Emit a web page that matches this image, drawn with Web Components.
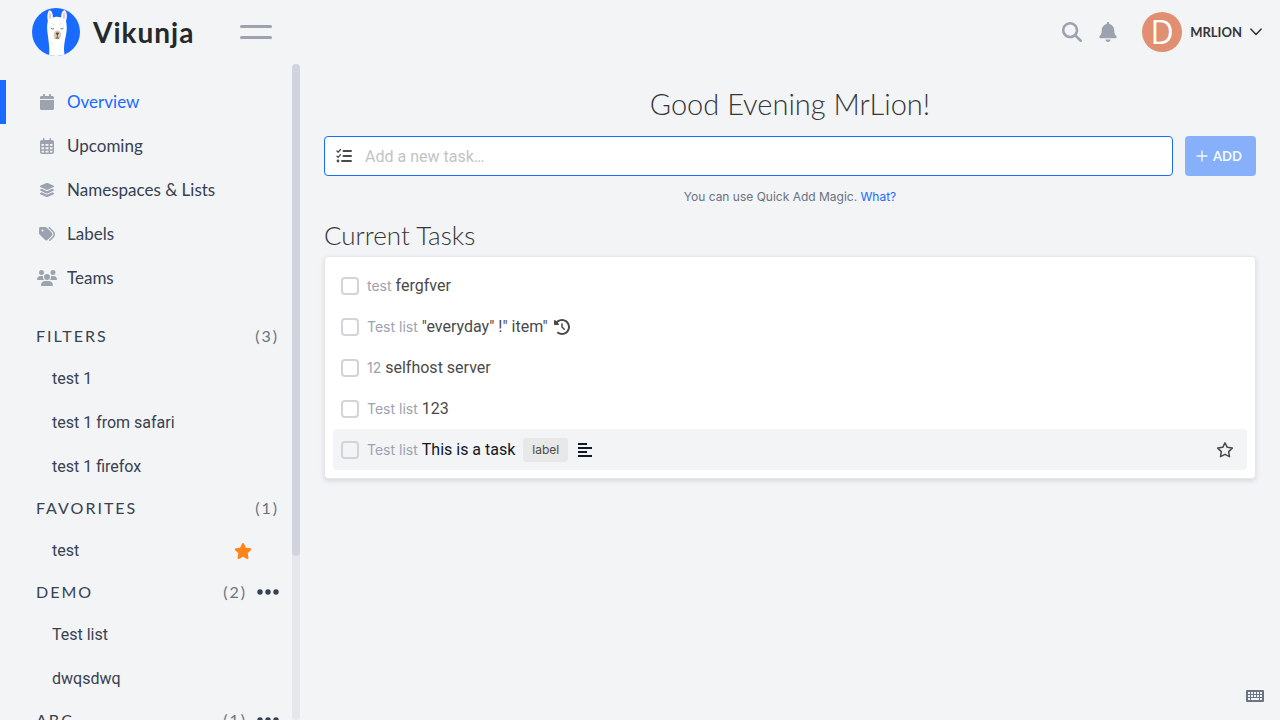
<!DOCTYPE html>
<html lang="en">
<head>
<meta charset="utf-8">
<meta name="viewport" content="width=device-width, initial-scale=1">
<title>Vikunja</title>
<style>
  html, body { margin: 0; }
  body {
    --display: Lato, "Open Sans", sans-serif;
    --body: Roboto, "Open Sans", sans-serif;
    --small: Inter, Roboto, sans-serif;
    --primary: #196aff;
    --grey-300: #d1d5db;
    --grey-400: #9ca3af;
    --grey-500: #6b7280;
    --grey-700: #374151;
    --text: #4a4a4a;
    background: #f3f4f6;
    color: var(--text);
    font: 16px/24px var(--body);
  }
</style>
</head>
<body>
<vk-app></vk-app>

<script>
const define = (name, html, setup) => {
  const template = document.createElement('template');
  template.innerHTML = '<style>*{box-sizing:border-box}a{color:inherit;text-decoration:none}button{font:inherit;color:inherit;background:none;border:0;padding:0;cursor:pointer}[hidden]{display:none!important}</style>' + html;
  customElements.define(name, class extends HTMLElement {
    constructor() {
      super();
      this.attachShadow({ mode: 'open' }).append(template.content.cloneNode(true));
    }
    connectedCallback() { if (setup) setup(this, this.shadowRoot); }
  });
};

const ICONS = {
  calendar: ['0 0 448 512', '<path d="M96 32V64H48C21.5 64 0 85.5 0 112v48H448V112c0-26.5-21.5-48-48-48H352V32c0-17.7-14.3-32-32-32s-32 14.3-32 32V64H160V32c0-17.7-14.3-32-32-32S96 14.3 96 32zM448 192H0V464c0 26.5 21.5 48 48 48H400c26.5 0 48-21.5 48-48V192z"/>'],
  days: ['0 0 448 512', '<path fill-rule="evenodd" d="M96 24V64H64C29 64 0 93 0 128V448c0 35 29 64 64 64H384c35 0 64-29 64-64V128c0-35-29-64-64-64H352V24c0-32-48-32-48 0V64H144V24c0-32-48-32-48 0zM48 192h80v56H48zm128 0h96v56H176zm144 0h80v56H320zM48 296h80v64H48zm128 0h96v64H176zm144 0h80v64H320zM48 408h80v56H64c-9 0-16-7-16-16zm128 0h96v56H176zm144 0h80v40c0 9-7 16-16 16H320z"/>'],
  layers: ['0 0 576 512', '<path d="M264.5 5.2c14.9-6.9 32.1-6.9 47 0l218.6 101c8.5 3.9 13.9 12.4 13.9 21.8s-5.4 17.9-13.9 21.8l-218.6 101c-14.9 6.9-32.1 6.9-47 0L45.9 149.8C37.4 145.8 32 137.3 32 128s5.4-17.9 13.9-21.8L264.5 5.2zM476.9 209.6l53.2 24.6c8.5 3.9 13.9 12.4 13.9 21.8s-5.4 17.9-13.9 21.8l-218.6 101c-14.9 6.9-32.1 6.9-47 0L45.9 277.8C37.4 273.8 32 265.3 32 256s5.4-17.9 13.9-21.8l53.2-24.6 152 70.2c23.4 10.8 50.4 10.8 73.8 0l152-70.2zm-152 198.2l152-70.2 53.2 24.6c8.5 3.9 13.9 12.4 13.9 21.8s-5.4 17.9-13.9 21.8l-218.6 101c-14.9 6.9-32.1 6.9-47 0L45.9 405.8C37.4 401.8 32 393.3 32 384s5.4-17.9 13.9-21.8l53.2-24.6 152 70.2c23.4 10.8 50.4 10.8 73.8 0z"/>'],
  tags: ['0 0 512 512', '<path d="M345 39.1L472.8 168.4c52.4 53 52.4 138.2 0 191.2L360.8 472.9c-9.3 9.4-24.5 9.5-33.9 .2s-9.5-24.5-.2-33.9L438.6 325.9c33.9-34.3 33.9-89.4 0-123.7L310.9 72.9c-9.3-9.4-9.2-24.6 .2-33.9s24.6-9.2 33.9 .2zM0 229.5V80C0 53.5 21.5 32 48 32H197.5c17 0 33.3 6.7 45.3 18.7l168 168c25 25 25 65.5 0 90.5L277.3 442.7c-25 25-65.5 25-90.5 0l-168-168C6.7 262.7 0 246.5 0 229.5zM144 144a32 32 0 1 0 -64 0 32 32 0 1 0 64 0z"/>'],
  users: ['0 0 640 512', '<path d="M144 0a80 80 0 1 1 0 160A80 80 0 1 1 144 0zM512 0a80 80 0 1 1 0 160A80 80 0 1 1 512 0zM0 298.7C0 239.8 47.8 192 106.7 192h42.7c15.9 0 31 3.5 44.6 9.7c-1.3 7.2-1.9 14.7-1.9 22.3c0 38.2 16.8 72.5 43.3 96c-.2 0-.4 0-.7 0H21.3C9.6 320 0 310.4 0 298.7zM405.3 320c-.2 0-.4 0-.7 0c26.6-23.5 43.3-57.8 43.3-96c0-7.6-.7-15-1.9-22.3c13.6-6.3 28.7-9.7 44.6-9.7h42.7C592.2 192 640 239.8 640 298.7c0 11.8-9.6 21.3-21.3 21.3H405.3zM224 224a96 96 0 1 1 192 0 96 96 0 1 1 -192 0zM128 485.3C128 411.7 187.7 352 261.3 352H378.7C452.3 352 512 411.7 512 485.3c0 14.7-11.9 26.7-26.7 26.7H154.7c-14.7 0-26.7-11.9-26.7-26.7z"/>'],
  search: ['0 0 512 512', '<path d="M416 208c0 45.9-14.9 88.3-40 122.7L502.6 457.4c12.5 12.5 12.5 32.8 0 45.3s-32.8 12.5-45.3 0L330.7 376c-34.4 25.2-76.8 40-122.7 40C93.1 416 0 322.9 0 208S93.1 0 208 0S416 93.1 416 208zM208 352a144 144 0 1 0 0-288 144 144 0 1 0 0 288z"/>'],
  bell: ['0 0 448 512', '<path d="M224 0c-17.7 0-32 14.3-32 32V51.2C119 66 64 130.6 64 208v18.8c0 47-17.3 92.4-48.5 127.6l-7.4 8.3c-8.4 9.4-10.4 22.9-5.3 34.4S19.4 416 32 416H416c12.6 0 24-7.4 29.2-18.9s3.1-25-5.3-34.4l-7.4-8.3C401.3 319.2 384 273.9 384 226.8V208c0-77.4-55-142-128-156.8V32c0-17.7-14.3-32-32-32zm45.3 493.3c12-12 18.7-28.3 18.7-45.3H224 160c0 17 6.7 33.3 18.7 45.3s28.3 18.7 45.3 18.7s33.3-6.7 45.3-18.7z"/>'],
  chevron: ['0 0 12 8', '<path d="M1 1.2L6 6.5L11 1.2" fill="none" stroke="currentColor" stroke-width="1.6" stroke-linecap="round" stroke-linejoin="round"/>'],
  star: ['0 0 576 512', '<path d="M316.9 18C311.6 7 300.4 0 288.1 0s-23.4 7-28.8 18L195 150.3 51.4 171.5c-12 1.8-22 10.2-25.7 21.7s-.7 24.2 7.9 32.7L137.8 329 113.2 474.7c-2 12 3 24.2 12.9 31.3s23 8 33.8 2.3l128.3-68.5 128.3 68.5c10.8 5.7 23.9 4.9 33.8-2.3s14.9-19.3 12.9-31.3L438.5 329 542.7 225.9c8.6-8.5 11.7-21.2 7.9-32.7s-13.7-19.9-25.7-21.7L381.2 150.3 316.9 18z"/>'],
  'star-line': ['0 0 576 512', '<path d="M288 26L361 171L521 195L405 309L432 470L288 394L144 470L171 309L55 195L215 171Z" fill="none" stroke="currentColor" stroke-width="48" stroke-linejoin="round"/>'],
  dots: ['0 0 22 6', '<circle cx="3" cy="3" r="2.7"/><circle cx="11" cy="3" r="2.7"/><circle cx="19" cy="3" r="2.7"/>'],
  history: ['0 0 512 512', '<path d="M75 75L41 41C25.9 25.9 0 36.6 0 57.9V168c0 13.3 10.7 24 24 24H134.1c21.4 0 32.1-25.9 17-41l-30.8-30.8C155 85.5 203 64 256 64c106 0 192 86 192 192s-86 192-192 192c-40.8 0-78.6-12.7-109.7-34.4c-14.5-10.1-34.4-6.6-44.6 7.9s-6.6 34.4 7.9 44.6C151.2 495 201.7 512 256 512c141.4 0 256-114.6 256-256S397.4 0 256 0C185.3 0 121.3 28.7 75 75zm181 53c-13.3 0-24 10.7-24 24V256c0 6.4 2.5 12.5 7 17l72 72c9.4 9.4 24.6 9.4 33.9 0s9.4-24.6 0-33.9l-65-65V152c0-13.3-10.7-24-24-24z"/>'],
  align: ['0 0 16 16', '<path d="M1 1h9v2H1zM1 5h14v2H1zM1 9h9v2H1zM1 13h14v2H1z"/>'],
  checklist: ['0 0 16 16', '<g fill="none" stroke="currentColor" stroke-linecap="round"><path d="M1 3L2.2 4.2L4.5 1.5M1 8.2L2.2 9.4L4.5 6.7" stroke-width="1.3" stroke-linejoin="round"/><path d="M7.5 3H15M7.5 8H15M6 13H15" stroke-width="1.9"/></g><circle cx="2" cy="13" r="1.4"/>'],
  plus: ['0 0 12 12', '<path d="M6 1V11M1 6H11" fill="none" stroke="currentColor" stroke-width="1.4" stroke-linecap="round"/>'],
  keyboard: ['0 0 18 12', '<path fill-rule="evenodd" d="M1 0H17Q18 0 18 1V11Q18 12 17 12H1Q0 12 0 11V1Q0 0 1 0ZM2 2v2h2V2zM5 2v2h2V2zM8 2v2h2V2zM11 2v2h2V2zM14 2v2h2V2zM2 5v2h2V5zM5 5v2h2V5zM8 5v2h2V5zM11 5v2h2V5zM14 5v2h2V5zM2 8v2h2V8zM5 8v2h8V8zM14 8v2h2V8z"/>']
};

define('vk-icon', `
  <style>:host{display:inline-flex;flex:none;width:16px;height:16px} svg{width:100%;height:100%;fill:currentColor}</style>
  <svg aria-hidden="true"></svg>`, (host, root) => {
  const [box, body] = ICONS[host.getAttribute('name')];
  const svg = root.querySelector('svg');
  svg.setAttribute('viewBox', box);
  svg.innerHTML = body;
});

define('vk-logo', `
  <style>
    :host{display:block}
    a{display:flex;align-items:center;gap:13px;color:#24292b;font:700 28px/40px var(--display);letter-spacing:1px}
    svg{width:48px;height:48px}
  </style>
  <a href="#">
    <svg viewBox="0 0 48 48" aria-hidden="true">
      <defs><clipPath id="disc"><circle cx="24" cy="24" r="24"/></clipPath></defs>
      <g clip-path="url(#disc)">
        <rect width="48" height="48" fill="#196aff"/>
        <path d="M17 48C18 41 16.500 33 15.800 27C15 22 14.800 17 15.800 13C14.800 8 15.500 4 17.500 2C20 3 21 6 20.800 9.500Q24.500 8 29.200 9.500C29 6 30 3 32.500 2C35 4 35.500 8 34 13C35 17 35 22 34 27C32.500 34 31 41 33 48Z" fill="#fff"/>
        <path d="M16.800 10.500C16.500 7 17 4.500 17.800 3.500C19.200 5 19.500 8 19 11ZM33.200 10.500C33.500 7 33 4.500 32.200 3.500C30.800 5 30.500 8 31 11Z" fill="#f3c9c9"/>
        <path d="M19 15L23 17.500M27 17L30 15M18 34L22 37M29 39L31 37" stroke="#f6e7d5" stroke-width="1"/>
        <ellipse cx="25.300" cy="27" rx="3.600" ry="4.400" fill="#dccab0"/>
        <path d="M24 25H26.800L25.300 27ZM25.300 27V30M23.500 30.300Q25.300 29.500 27.200 30.300" fill="#473e3b" stroke="#473e3b" stroke-width=".7"/>
        <path d="M18.800 20Q20.500 22 22 20.500M28.500 20.500Q30 22 31.500 20" fill="none" stroke="#53576b" stroke-width=".8"/>
      </g>
    </svg>
    <span>Vikunja</span>
  </a>`);

define('vk-topbar', `
  <style>
    :host{display:block}
    header{display:flex;align-items:center;height:64px;padding:0 18px 0 32px}
    .toggle{display:grid;gap:8px;width:32px;margin-left:46px}
    .toggle i{height:3px;border-radius:2px;background:var(--grey-400)}
    .tools{display:flex;align-items:center;margin-left:auto;color:var(--grey-400)}
    .tools button{display:flex;align-items:center}
    .tools vk-icon{width:20px;height:20px}
    .bell{margin:0 24px 0 16px}
    .user{gap:8px;color:#363636;font:700 13px/20px var(--display)}
    .avatar{display:grid;place-items:center;width:40px;height:40px;border-radius:50%;background:#e08f70;color:#fff;font:400 32px/40px "Open Sans",sans-serif}
    .tools .user vk-icon{width:12px;height:8px}
  </style>
  <header>
    <vk-logo></vk-logo>
    <button class="toggle" aria-label="Toggle menu"><i></i><i></i></button>
    <div class="tools">
      <button aria-label="Search"><vk-icon name="search"></vk-icon></button>
      <button class="bell" aria-label="Notifications"><vk-icon name="bell"></vk-icon></button>
      <button class="user"><span class="avatar">D</span><span>MRLION</span><vk-icon name="chevron"></vk-icon></button>
    </div>
  </header>`);

define('vk-nav-item', `
  <style>
    :host{display:block}
    a{display:flex;align-items:center;gap:10px;height:44px;padding-left:30px;border-left:6px solid transparent;color:var(--grey-700);font:400 17px/24px var(--display)}
    :host([active]) a{border-color:var(--primary);color:var(--primary)}
    .icon{display:flex;justify-content:center;width:21px;color:var(--grey-400)}
    :host([icon=users]) vk-icon{width:20px}
  </style>
  <a href="#"><span class="icon"></span><slot></slot></a>`, (host, root) => {
  const icon = document.createElement('vk-icon');
  icon.setAttribute('name', host.getAttribute('icon'));
  root.querySelector('.icon').replaceChildren(icon);
});

define('vk-namespace', `
  <style>
    :host{display:block}
    .title{display:flex;align-items:center;height:40px;padding:0 13px 0 36px;font:400 16px/24px var(--display);letter-spacing:2px;color:var(--grey-700)}
    h2{margin:0 auto 0 0;font:inherit}
    .count{color:var(--grey-500)}
    .more{display:flex;margin-left:10px}
    .more vk-icon{width:22px;height:6px}
  </style>
  <div class="title"><h2></h2><span class="count"></span><button class="more" aria-label="Options"><vk-icon name="dots"></vk-icon></button></div>
  <slot></slot>`, (host, root) => {
  root.querySelector('h2').textContent = host.getAttribute('name');
  root.querySelector('.count').textContent = `(${host.getAttribute('count')})`;
  root.querySelector('.more').hidden = !host.hasAttribute('menu');
});

define('vk-list-link', `
  <style>
    :host{display:flex;align-items:center;box-sizing:border-box;height:44px;padding:1px 40px 0 52px;color:var(--grey-700)}
    a{flex:1}
    button{display:flex;color:#ff851b}
    vk-icon{width:18px;height:16px}
  </style>
  <a href="#"><slot></slot></a>
  <button aria-label="Remove from favorites"><vk-icon name="star"></vk-icon></button>`, (host, root) => {
  root.querySelector('button').hidden = !host.hasAttribute('favorite');
});

define('vk-sidebar', `
  <style>
    :host{display:flex;min-height:0}
    nav{flex:1;min-width:0;padding:16px 0;overflow-y:auto;scrollbar-width:none}
    .main{margin-bottom:16px}
    .rail{width:8px;border-radius:4px;background:#e5e7eb}
    .thumb{height:75%;border-radius:4px;background:#d1d4de}
  </style>
  <nav>
    <div class="main">
      <vk-nav-item icon="calendar" active>Overview</vk-nav-item>
      <vk-nav-item icon="days">Upcoming</vk-nav-item>
      <vk-nav-item icon="layers">Namespaces &amp; Lists</vk-nav-item>
      <vk-nav-item icon="tags">Labels</vk-nav-item>
      <vk-nav-item icon="users">Teams</vk-nav-item>
    </div>
    <vk-namespace name="FILTERS" count="3">
      <vk-list-link>test 1</vk-list-link>
      <vk-list-link>test 1 from safari</vk-list-link>
      <vk-list-link>test 1 firefox</vk-list-link>
    </vk-namespace>
    <vk-namespace name="FAVORITES" count="1">
      <vk-list-link favorite>test</vk-list-link>
    </vk-namespace>
    <vk-namespace name="DEMO" count="2" menu>
      <vk-list-link>Test list</vk-list-link>
      <vk-list-link>dwqsdwq</vk-list-link>
    </vk-namespace>
    <vk-namespace name="ABC" count="1" menu></vk-namespace>
  </nav>
  <div class="rail"><div class="thumb"></div></div>`);

define('vk-add-task', `
  <style>
    :host{display:block}
    form{display:flex;gap:12px}
    .field{display:flex;align-items:center;flex:1;height:40px;padding-left:11px;gap:13px;border:1px solid var(--primary);border-radius:4px;background:#fff}
    input{flex:1;min-width:0;height:100%;padding:0;border:0;outline:0;background:none;color:var(--text);font:inherit}
    input::placeholder{color:#c3c3c3;opacity:1}
    button{display:flex;align-items:center;justify-content:center;gap:5px;width:71px;height:40px;padding-right:3px;border-radius:4px;background:#86b0fa;color:#f5f8ff;font:700 13px/20px var(--display)}
    button vk-icon{width:12px;height:12px}
    p{margin:11px 0 0;text-align:center;font:12px/20px var(--small);color:var(--grey-500)}
    p a{color:var(--primary)}
  </style>
  <form>
    <label class="field"><vk-icon name="checklist"></vk-icon><input type="text" placeholder="Add a new task…" aria-label="Add a new task"></label>
    <button type="button"><vk-icon name="plus"></vk-icon>ADD</button>
  </form>
  <p>You can use Quick Add Magic. <a href="#">What?</a></p>`);

define('vk-task', `
  <style>
    :host{display:flex;align-items:center;height:41px;padding:0 13px 0 8px;border-radius:4px}
    :host([hover]){background:#f3f4f6;color:#111827}
    input{appearance:none;width:18px;height:18px;margin:0 8px 0 0;border:2px solid var(--grey-300);border-radius:4px}
    a{display:flex;align-items:center;flex:1;gap:6px}
    .text{display:flex;align-items:baseline;gap:4px}
    .list{color:var(--grey-400);font-family:var(--small);font-size:14px}
    .star{display:flex;color:var(--text)}
    .star vk-icon{width:18px}
  </style>
  <input type="checkbox" id="done">
  <a href="#"><span class="text"><span class="list"></span><label for="done"></label></span><slot></slot></a>
  <button class="star" aria-label="Add to favorites"><vk-icon name="star-line"></vk-icon></button>`, (host, root) => {
  root.querySelector('.list').textContent = host.getAttribute('list');
  root.querySelector('label').textContent = host.getAttribute('name');
  root.querySelector('.star').hidden = !host.hasAttribute('hover');
});

define('vk-tag', `
  <style>:host{display:inline-flex;align-items:center;height:24px;margin:0 3px 0 2px;padding:0 9px;border-radius:4px;background:#e8e8e8;color:var(--text);font:12px/20px var(--small)}</style>
  <slot></slot>`);

define('vk-task-card', `
  <style>:host{display:block;padding:8px;border:1px solid #e5e7eb;border-radius:4px;background:#fff;box-shadow:0 2px 4px #9ca3af55}</style>
  <slot></slot>`);

define('vk-home', `
  <style>
    :host{display:block;padding:20px 24px 24px}
    h1,h2{margin:0;font-family:var(--display);font-weight:300;color:#363636}
    h1{margin-bottom:12px;text-align:center;font-size:29px;line-height:40px}
    h2{margin:12px 0 5px;font-size:26px;line-height:32px}
  </style>
  <h1>Good Evening MrLion!</h1>
  <vk-add-task></vk-add-task>
  <h2>Current Tasks</h2>
  <vk-task-card>
    <vk-task list="test" name="fergfver"></vk-task>
    <vk-task list="Test list" name="&quot;everyday&quot; !&quot; item&quot;"><vk-icon name="history"></vk-icon></vk-task>
    <vk-task list="12" name="selfhost server"></vk-task>
    <vk-task list="Test list" name="123"></vk-task>
    <vk-task list="Test list" name="This is a task" hover><vk-tag>label</vk-tag><vk-icon name="align"></vk-icon></vk-task>
  </vk-task-card>`);

define('vk-app', `
  <style>
    :host{display:grid;grid-template:64px minmax(0,1fr) / 300px minmax(0,1fr);height:100vh}
    vk-topbar{grid-column:1 / -1}
    vk-home{overflow-y:auto}
    .keys{position:fixed;right:16px;bottom:18px;display:flex;color:var(--grey-500)}
    .keys vk-icon{width:18px;height:12px}
  </style>
  <vk-topbar></vk-topbar>
  <vk-sidebar></vk-sidebar>
  <vk-home></vk-home>
  <button class="keys" aria-label="Keyboard shortcuts"><vk-icon name="keyboard"></vk-icon></button>`);
</script>
</body>
</html>
